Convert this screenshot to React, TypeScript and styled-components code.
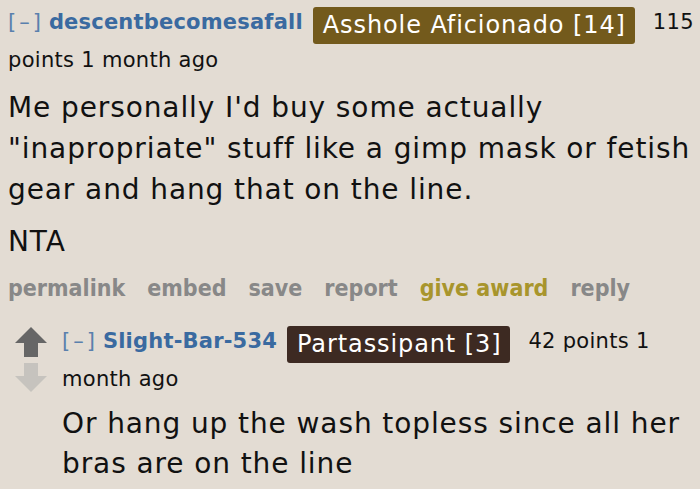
import styled, { createGlobalStyle } from 'styled-components';

const GlobalStyle = createGlobalStyle`
  html, body {
    margin: 0;
    padding: 0;
    background: #e3dcd3;
  }
  body {
    font-family: "DejaVu Sans", Verdana, sans-serif;
    color: #111;
  }
`;

const Page = styled.div`
  width: 700px;
  height: 489px;
  overflow: hidden;
  background: #e3dcd3;
  padding: 6px 4px 0 8px;
  box-sizing: border-box;
`;

const Tagline = styled.div`
  font-size: 21px;
  line-height: 33px;
  letter-spacing: 0.3px;
  color: #111;
`;

const Collapse = styled.span`
  color: #5a80ad;
  letter-spacing: 3px;
  margin-right: 5px;
`;

const Author = styled.span`
  color: #3a6aa0;
  font-weight: bold;
  letter-spacing: 0.2px;
  margin-right: 10px;
`;

const Flair = styled.span<{ $bg: string }>`
  display: inline-block;
  background: ${(p) => p.$bg};
  color: #fff;
  font-size: 24px;
  line-height: 29px;
  letter-spacing: 0.9px;
  padding: 4px 9px 4px 10px;
  border-radius: 3px;
  margin-right: 18px;
  vertical-align: -4px;
`;

const Body = styled.div`
  font-family: "DejaVu Sans", Verdana, sans-serif;
  font-size: 28px;
  letter-spacing: 0.9px;
  line-height: 41px;
  margin-top: 10px;
  padding-right: 4px;

  p {
    margin: 0 0 11px 0;
  }
`;

const Actions = styled.ul`
  list-style: none;
  display: flex;
  gap: 22px;
  margin: 8px 0 0 0;
  padding: 0;
  font-family: "DejaVu Sans Condensed", "DejaVu Sans", sans-serif;
  font-weight: bold;
  font-size: 23px;
  line-height: 30px;
`;

const Action = styled.li<{ $gold?: boolean }>`
  color: ${(p) => (p.$gold ? '#a8952c' : '#888888')};
`;

const Child = styled.div`
  display: flex;
  margin-top: 22px;
`;

const Votes = styled.div`
  display: flex;
  flex-direction: column;
  gap: 6px;
  width: 54px;
  padding: 2px 0 0 7px;
  box-sizing: border-box;
  flex-shrink: 0;
`;

const ChildContent = styled.div`
  flex: 1;
  padding-right: 4px;

  ${Body} {
    line-height: 40px;
    margin-top: 8px;
  }
`;

const Arrow = ({ up }: { up?: boolean }) => (
  <svg width="32" height="30" viewBox="0 0 32 30">
    {up ? (
      <path d="M16 0 L32 16 L23 16 L23 30 L9 30 L9 16 L0 16 Z" fill="#666666" />
    ) : (
      <path d="M9 0 L23 0 L23 13 L32 13 L16 29 L0 13 L9 13 Z" fill="#c6c3be" />
    )}
  </svg>
);

export default function App() {
  return (
    <>
      <GlobalStyle />
      <Page>
        <Tagline>
          <Collapse>[–]</Collapse>
          <Author>descentbecomesafall</Author>
          <Flair $bg="#735a1c">Asshole Aficionado [14]</Flair>
          115 points 1 month ago
        </Tagline>
        <Body>
          <p>Me personally I'd buy some actually "inapropriate" stuff like a gimp mask or fetish gear and hang that on the line.</p>
          <p>NTA</p>
        </Body>
        <Actions>
          <Action>permalink</Action>
          <Action>embed</Action>
          <Action>save</Action>
          <Action>report</Action>
          <Action $gold>give award</Action>
          <Action>reply</Action>
        </Actions>
        <Child>
          <Votes>
            <Arrow up />
            <Arrow />
          </Votes>
          <ChildContent>
            <Tagline>
              <Collapse>[–]</Collapse>
              <Author>Slight-Bar-534</Author>
              <Flair $bg="#3d2a22">Partassipant [3]</Flair>
              42 points 1 month ago
            </Tagline>
            <Body>
              <p>Or hang up the wash topless since all her bras are on the line</p>
            </Body>
          </ChildContent>
        </Child>
      </Page>
    </>
  );
}
